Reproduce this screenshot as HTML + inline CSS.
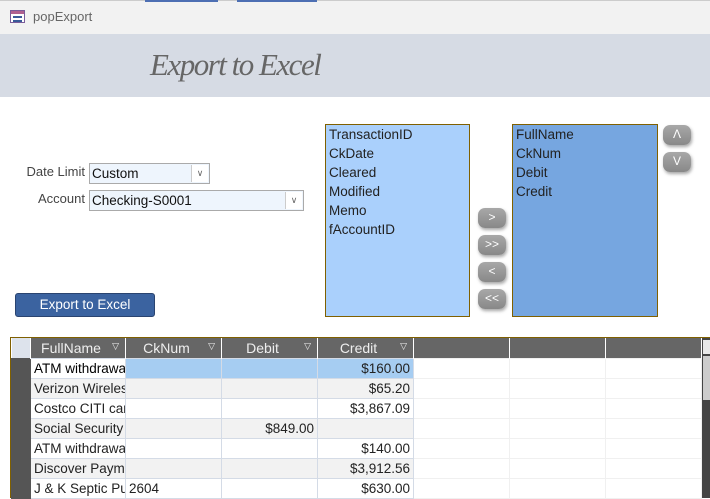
<!DOCTYPE html>
<html><head><style>
*{margin:0;padding:0;box-sizing:border-box}
body{width:710px;height:498px;background:#fff;position:relative;overflow:hidden;font-family:"Liberation Sans","DejaVu Sans",sans-serif;font-size:13px;color:#222}
.a{position:absolute}
.tb{left:0;top:0;width:710px;height:34px;background:#f2f2f2;border-top:1px solid #ccc}
.hd{left:0;top:34px;width:710px;height:63px;background:#d6dbe4}
.lbl{color:#444;font-size:13px;text-align:right}
.cb{background:#eef5fd;border:1px solid #aaa;height:21px;font-size:13.5px;padding:2px 0 0 2px;color:#111}
.cb .dd{position:absolute;right:1px;top:1px;width:17px;height:17px;background:#fff;border-left:1px solid #ccc;font-size:9px;text-align:center;line-height:17px;color:#666}
.lb{border:1px solid #806000;font-size:13.5px;line-height:19px;padding:0 3px;color:#222}
.btn{width:28px;height:20px;border-radius:7px;background:linear-gradient(#a8a8a8,#888);box-shadow:1px 2px 3px rgba(0,0,0,.35);color:#fff;font-size:12px;text-align:center;line-height:19px}
.g{border-collapse:collapse;table-layout:fixed;font-size:13.5px}
.g td{height:20px;border:1px solid #d4dbe6;padding:0 3px;white-space:nowrap;overflow:hidden}
.g th{height:20px;background:#666;color:#eee;font-weight:normal;border-right:1px solid #fff;text-align:center;position:relative;font-size:14px;padding-right:14px}
.g th .t{position:absolute;right:6px;top:3px;font-size:9px}
.g td.s{background:#555;border-color:#555;padding:0}
.r{text-align:right}
.alt td{background:#f2f2f2}
.e td.x{border-color:#f0f0f0;background:#fff}
</style></head><body>
<div class="a tb"></div>
<div class="a" style="left:145px;top:0;width:73px;height:2px;background:#4d6fb3"></div>
<div class="a" style="left:237px;top:0;width:80px;height:2px;background:#4d6fb3"></div>
<div class="a" style="left:10px;top:10px;width:15px;height:13px;border:1px solid #7a5c9a;background:#fff"><div style="height:3px;background:#b06090"></div><div style="margin:2px 2px;height:6px;border-top:2px solid #3a5a9a;border-bottom:2px solid #3a5a9a"></div></div>
<div class="a" style="left:33px;top:9px;font-size:13px;color:#666">popExport</div>
<div class="a hd"></div>
<div class="a" style="left:150px;top:47px;font-family:'Liberation Serif',serif;font-style:italic;font-size:31px;color:#666;letter-spacing:-1.5px">Export to Excel</div>

<div class="a lbl" style="left:0;top:164px;width:85px">Date Limit</div>
<div class="a cb" style="left:89px;top:163px;width:121px">Custom<span class="dd">&#8744;</span></div>
<div class="a lbl" style="left:0;top:191px;width:85px">Account</div>
<div class="a cb" style="left:89px;top:190px;width:215px">Checking-S0001<span class="dd">&#8744;</span></div>
<div class="a" style="left:15px;top:293px;width:140px;height:24px;background:#3b63a0;border:1px solid #2a4470;border-radius:3px;color:#fff;text-align:center;line-height:22px;font-size:13.5px">Export to Excel</div>

<div class="a lb" style="left:325px;top:124px;width:145px;height:193px;background:#aad0fc">TransactionID<br>CkDate<br>Cleared<br>Modified<br>Memo<br>fAccountID</div>
<div class="a lb" style="left:512px;top:124px;width:146px;height:193px;background:#76a6e0">FullName<br>CkNum<br>Debit<br>Credit</div>
<div class="a btn" style="left:478px;top:208px">&gt;</div>
<div class="a btn" style="left:478px;top:235px">&gt;&gt;</div>
<div class="a btn" style="left:478px;top:262px">&lt;</div>
<div class="a btn" style="left:478px;top:289px">&lt;&lt;</div>
<div class="a btn" style="left:663px;top:125px">&#923;</div>
<div class="a btn" style="left:663px;top:152px">V</div>

<div class="a" style="left:10px;top:337px;width:700px;height:161px;border-top:1px solid #806000;border-left:1px solid #806000"></div>
<table class="a g" style="left:11px;top:338px;width:690px">
<colgroup><col style="width:19px"><col style="width:95px"><col style="width:96px"><col style="width:96px"><col style="width:96px"><col style="width:96px"><col style="width:96px"><col style="width:96px"></colgroup>
<tr><th style="background:#dde3ec"></th><th>FullName<span class="t">&#9661;</span></th><th>CkNum<span class="t">&#9661;</span></th><th>Debit<span class="t">&#9661;</span></th><th>Credit<span class="t">&#9661;</span></th><th></th><th></th><th></th></tr>
<tr class="e"><td class="s"></td><td style="color:#000">ATM withdrawal</td><td style="background:#a6cdf2"></td><td style="background:#a6cdf2"></td><td class="r" style="background:#a6cdf2">$160.00</td><td class="x"></td><td class="x"></td><td class="x"></td></tr>
<tr class="alt e"><td class="s"></td><td>Verizon Wireless</td><td></td><td></td><td class="r">$65.20</td><td class="x"></td><td class="x"></td><td class="x"></td></tr>
<tr class="e"><td class="s"></td><td>Costco CITI card</td><td></td><td></td><td class="r">$3,867.09</td><td class="x"></td><td class="x"></td><td class="x"></td></tr>
<tr class="alt e"><td class="s"></td><td>Social Security</td><td></td><td class="r">$849.00</td><td></td><td class="x"></td><td class="x"></td><td class="x"></td></tr>
<tr class="e"><td class="s"></td><td>ATM withdrawal</td><td></td><td></td><td class="r">$140.00</td><td class="x"></td><td class="x"></td><td class="x"></td></tr>
<tr class="alt e"><td class="s"></td><td>Discover Payment</td><td></td><td></td><td class="r">$3,912.56</td><td class="x"></td><td class="x"></td><td class="x"></td></tr>
<tr class="e"><td class="s"></td><td>J &amp; K Septic Pump</td><td>2604</td><td></td><td class="r">$630.00</td><td class="x"></td><td class="x"></td><td class="x"></td></tr>
</table>
<div class="a" style="left:702px;top:338px;width:8px;height:160px;background:#444"></div>
<div class="a" style="left:703px;top:340px;width:7px;height:14px;background:#e8e8e8"></div>
<div class="a" style="left:703px;top:356px;width:7px;height:44px;background:#ccc"></div>
</body></html>
